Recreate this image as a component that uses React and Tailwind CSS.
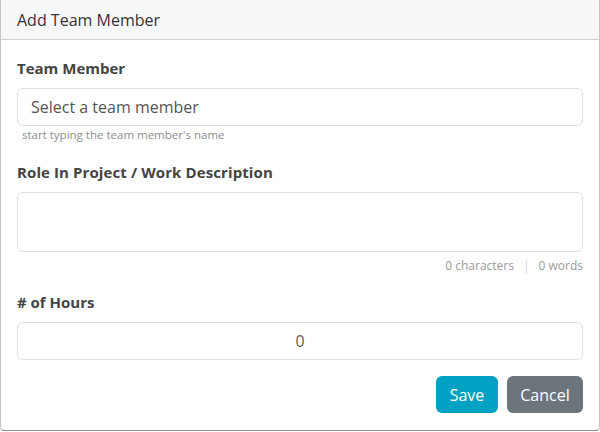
export default function App() {
  return (
    <div className="w-[600px] h-[432px] bg-white" style={{ fontFamily: "'Open Sans', 'Noto Sans', sans-serif" }}>
      <div className="w-[600px] h-[431px] border border-t-0 border-[#c4c4c4] border-b-[#8a8a8a] rounded-b-[4px] bg-white flex flex-col">
        {/* header */}
        <div className="h-[40px] bg-[#f7f8fa] border-b border-[#cfcfcf] px-4 flex items-center">
          <h2 className="text-[16px] text-[#333] leading-none">Add Team Member</h2>
        </div>

        {/* body */}
        <div className="px-4 pt-[17px] flex flex-col">
          <label className="text-[15px] leading-[22px] font-bold text-[#444]">Team Member</label>
          <input
            placeholder="Select a team member"
            className="mt-[9px] h-[38px] w-full border border-[#dedede] rounded-[6px] px-[13px] text-[16px] text-[#555] placeholder:text-[#555] outline-none"
          />
          <p className="mt-[1px] pl-[5px] text-[11.5px] leading-[16px] text-[#8d8d8d]">start typing the team member's name</p>

          <label className="mt-[18px] text-[15px] leading-[22px] font-bold text-[#444] tracking-[0.1px]">Role In Project / Work Description</label>
          <textarea className="mt-[9px] h-[60px] w-full border border-[#dedede] rounded-[6px] px-[13px] py-2 text-[15px] resize-none outline-none" />
          <div className="mt-[6px] flex justify-end items-center gap-[9px] text-[12px] leading-[16px] text-[#9a9a9a]">
            <span>0 characters</span>
            <span className="text-[#c9d3e0]">|</span>
            <span>0 words</span>
          </div>

          <label className="mt-[17px] text-[15px] leading-[22px] font-bold text-[#444]">
            # of Hours
          </label>
          <input
            defaultValue="0"
            className="mt-[9px] h-[38px] w-full border border-[#dedede] rounded-[6px] px-[13px] text-[16px] text-[#6a5d50] text-center outline-none"
          />

          <div className="mt-[16px] flex justify-end gap-[9px]">
            <button className="h-[37px] w-[62px] rounded-[6px] bg-[#00a1c2] text-white text-[16px]">Save</button>
            <button className="h-[37px] w-[76px] rounded-[6px] bg-[#6c747c] text-white text-[16px]">Cancel</button>
          </div>
        </div>
      </div>
    </div>
  );
}
